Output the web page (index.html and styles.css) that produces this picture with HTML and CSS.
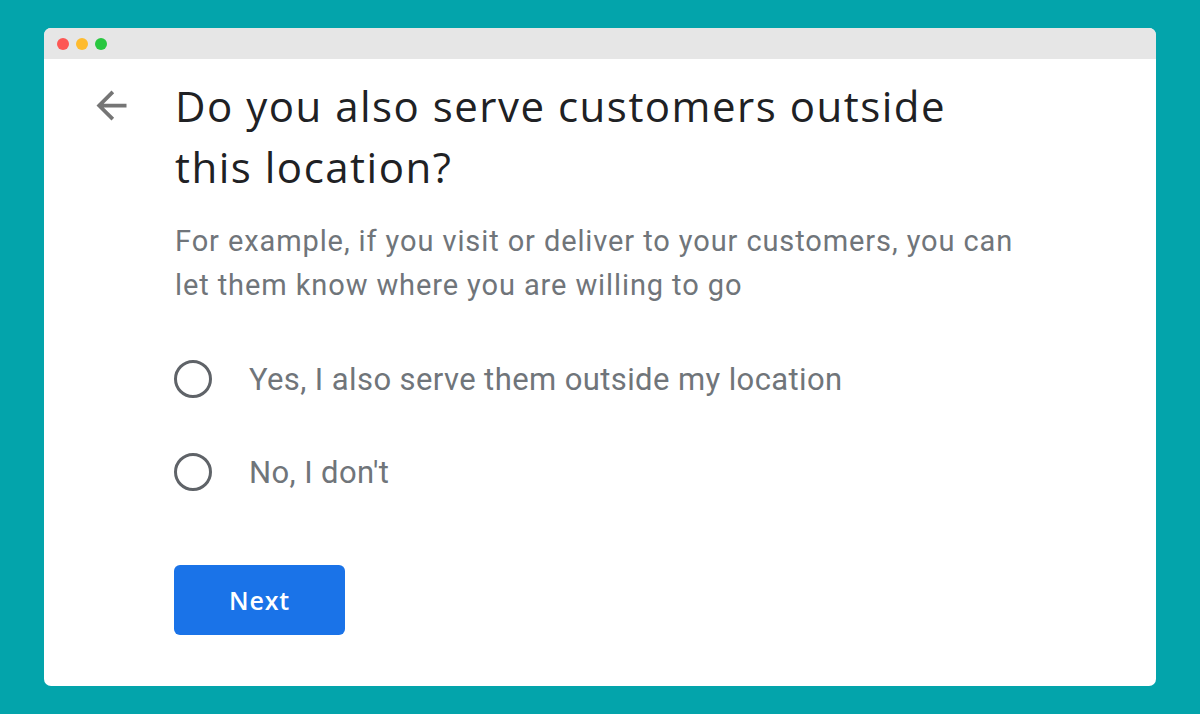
FILE: index.html
```html
<!DOCTYPE html>
<html>
<head>
<meta charset="utf-8">
<link rel="stylesheet" href="styles.css">
</head>
<body>
<div class="window">
  <div class="titlebar">
    <span class="dot red"></span>
    <span class="dot yellow"></span>
    <span class="dot green"></span>
  </div>
  <div class="content">
    <div class="back">
      <svg width="45" height="45" viewBox="0 0 24 24"><path fill="#757575" d="M20 11H7.83l5.59-5.59L12 4l-8 8 8 8 1.41-1.41L7.83 13H20v-2z"/></svg>
    </div>
    <div class="main">
      <h1 class="title">Do you also serve customers outside this location?</h1>
      <p class="desc">For example, if you visit or deliver to your customers, you can let them know where you are willing to go</p>
      <div class="options">
        <label class="option"><span class="radio"></span><span class="label">Yes, I also serve them outside my location</span></label>
        <label class="option"><span class="radio"></span><span class="label">No, I don't</span></label>
      </div>
      <button class="next">Next</button>
    </div>
  </div>
</div>
</body>
</html>
```
FILE: styles.css
```css
html, body {
  margin: 0;
  padding: 0;
}
body {
  background: #03a4ab;
  width: 1200px;
  height: 714px;
  overflow: hidden;
  padding-top: 28px;
  box-sizing: border-box;
}
.window {
  margin-left: 44px;
  width: 1112px;
  height: 658px;
  background: #ffffff;
  border-radius: 7px;
  overflow: hidden;
}
.titlebar {
  height: 31px;
  background: #e6e6e6;
  display: flex;
  align-items: center;
  padding-left: 13px;
  gap: 7px;
  box-sizing: border-box;
}
.dot {
  width: 12px;
  height: 12px;
  border-radius: 50%;
  display: block;
}
.red { background: #fd5754; }
.yellow { background: #febb2e; }
.green { background: #29c740; }
.content {
  display: flex;
  padding-left: 43px;
}
.back {
  width: 88px;
  padding-top: 24px;
}
.back svg { display: block; margin-left: 2px; }
.main {
  flex: 1;
}
.title {
  margin: 0;
  padding-top: 16px;
  font-family: "Open Sans", "Noto Sans", sans-serif;
  font-weight: 400;
  font-size: 42px;
  line-height: 61px;
  color: #202124;
  width: 800px;
  letter-spacing: 1.5px;
}
.desc {
  margin: 0;
  margin-top: 22px;
  font-family: Roboto, sans-serif;
  font-size: 29px;
  line-height: 44px;
  color: #70757a;
  width: 850px;
  letter-spacing: 0.9px;
}
.options {
  margin-top: 53px;
  display: flex;
  flex-direction: column;
  gap: 55px;
}
.option {
  display: flex;
  align-items: center;
  height: 38px;
}
.radio {
  width: 32px;
  height: 32px;
  border: 3px solid #5f6368;
  border-radius: 50%;
  margin-left: -1px;
  margin-right: 37px;
}
.label {
  font-family: Roboto, sans-serif;
  font-size: 31px;
  letter-spacing: 0.4px;
  color: #70757a;
}
.next {
  margin-top: 74px;
  margin-left: -1px;
  width: 171px;
  height: 70px;
  border: none;
  border-radius: 6px;
  background: #1a73e8;
  color: #ffffff;
  font-family: "Open Sans", sans-serif;
  font-weight: 600;
  font-size: 25px;
  letter-spacing: 0.8px;
}
```
